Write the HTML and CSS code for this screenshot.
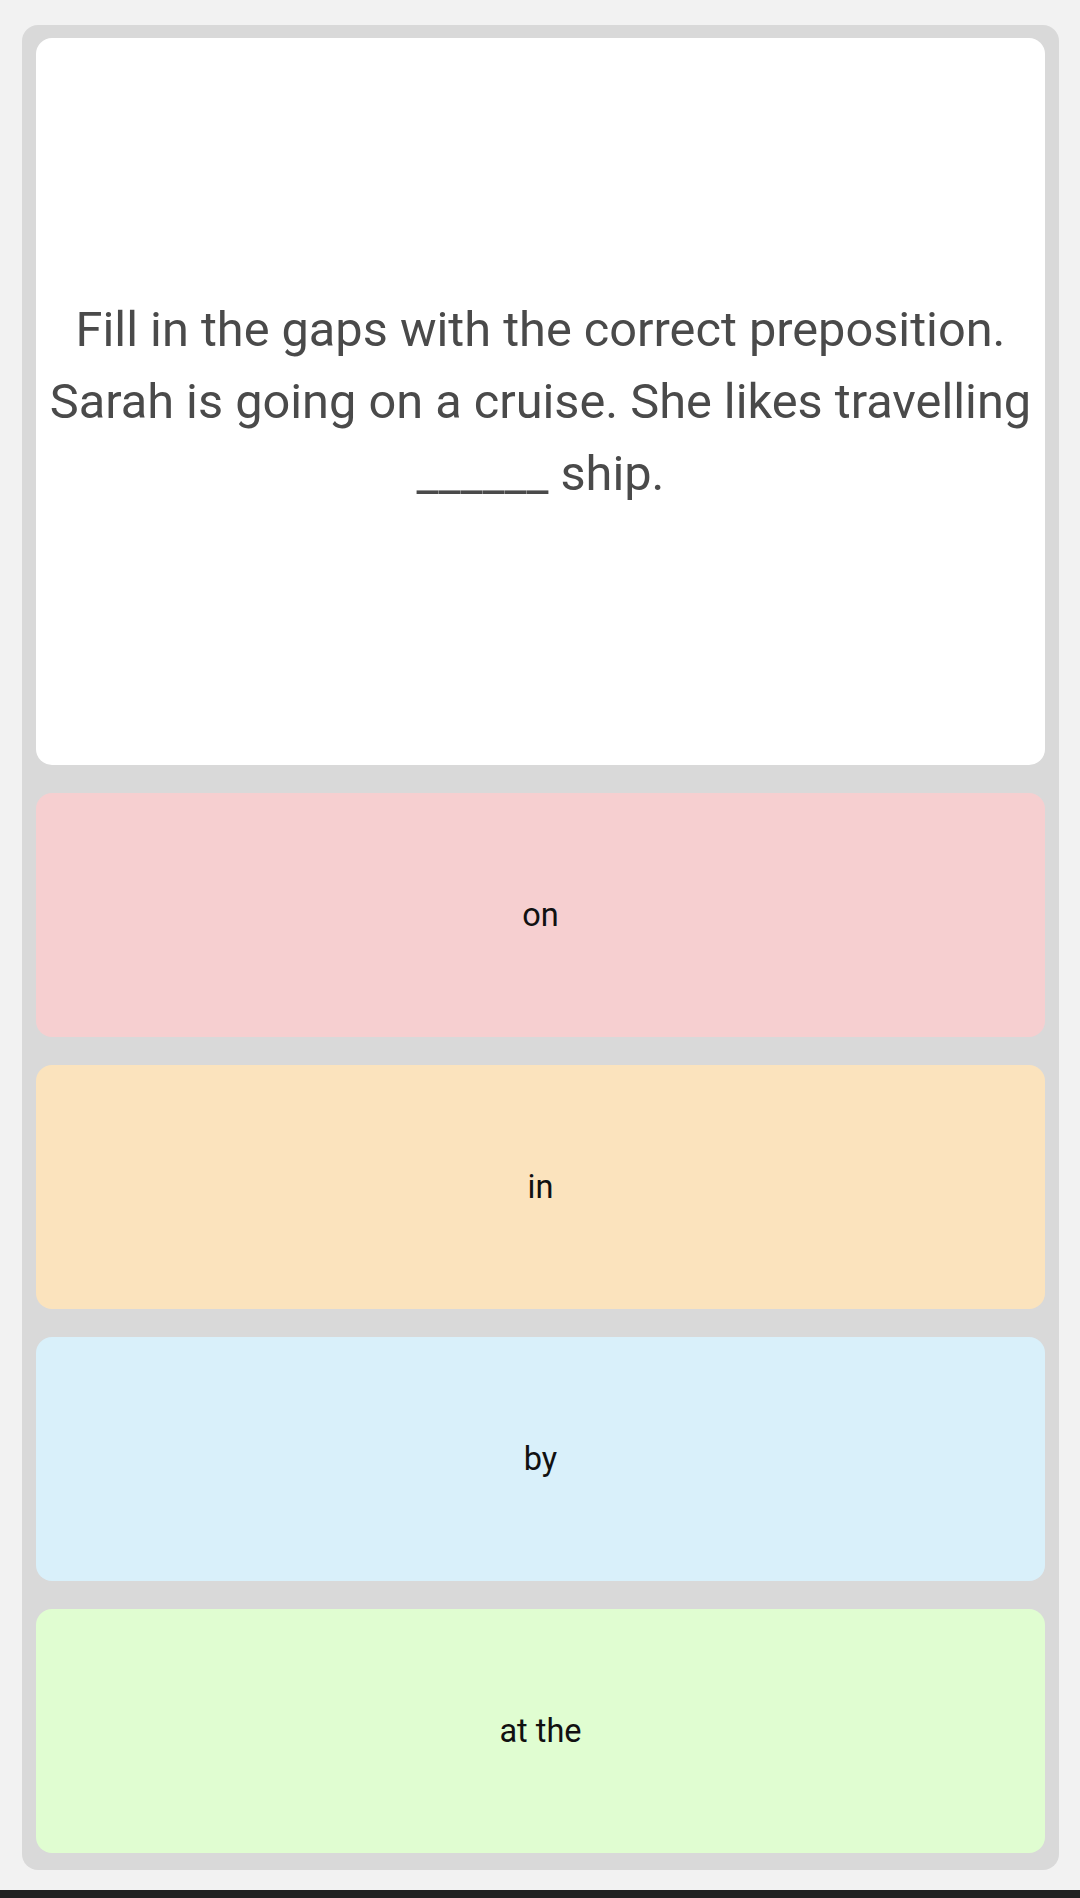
FILE: index.html
```html
<!DOCTYPE html>
<html>
<head>
<meta charset="utf-8">
<link rel="stylesheet" href="styles.css">
</head>
<body>
<div class="page">
  <div class="quiz">
    <div class="question">
      <p>Fill in the gaps with the correct preposition. Sarah is going on a cruise. She likes travelling ______ ship.</p>
    </div>
    <div class="answer pink">on</div>
    <div class="answer orange">in</div>
    <div class="answer blue">by</div>
    <div class="answer green">at the</div>
  </div>
</div>
<div class="navbar"></div>
</body>
</html>
```
FILE: styles.css
```css
html, body {
  margin: 0;
  padding: 0;
  background: #f2f2f2;
  font-family: Roboto, "Liberation Sans", sans-serif;
}
.page {
  height: 1890px;
  padding: 25px 21px 0 22px;
  box-sizing: border-box;
}
.quiz {
  background: #d9d9d9;
  border-radius: 16px;
  padding: 13px 14px 17px 14px;
  display: flex;
  flex-direction: column;
  gap: 28px;
}
.question {
  background: #ffffff;
  border-radius: 16px;
  height: 727px;
  display: flex;
  align-items: center;
  justify-content: center;
  text-align: center;
  padding: 0 6px;
  box-sizing: border-box;
}
.question p {
  margin: 0;
  color: #4a4a4a;
  font-size: 48.7px;
  line-height: 72px;
}
.answer {
  height: 244px;
  border-radius: 16px;
  display: flex;
  align-items: center;
  justify-content: center;
  font-size: 32.5px;
  color: #111;
}
.pink { background: #f6cfd0; }
.orange { background: #fbe3bd; }
.blue { background: #d9f0fa; }
.green { background: #e0fdd1; }
.navbar {
  height: 8px;
  background: #222;
}
```
